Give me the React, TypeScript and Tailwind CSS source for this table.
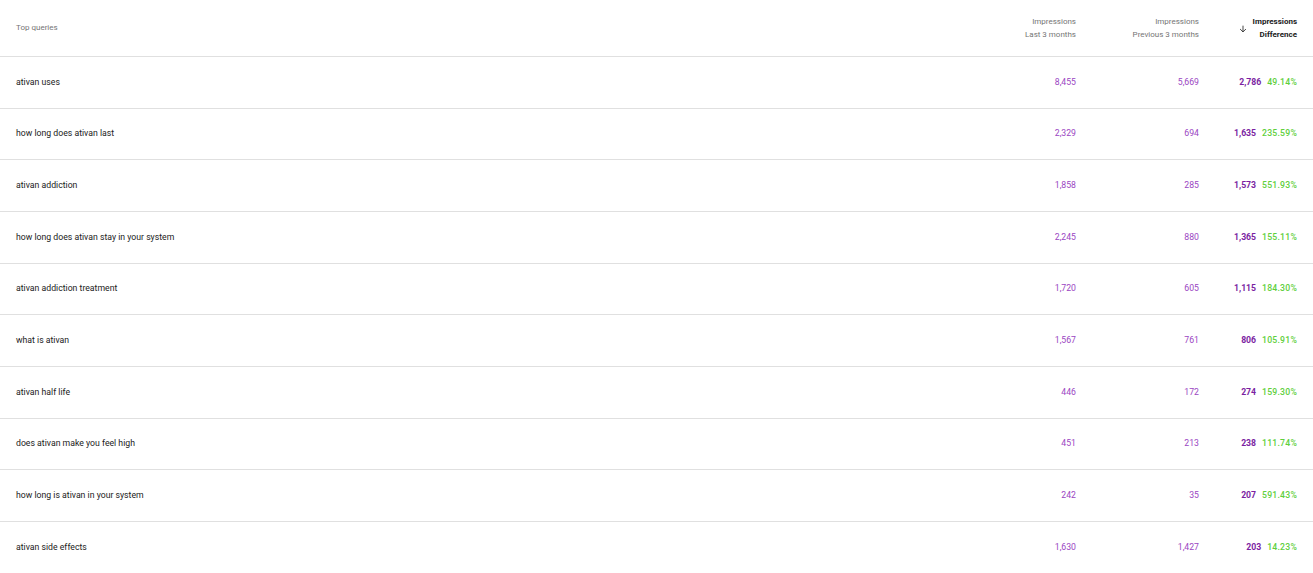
const rows = [
  { q: "ativan uses", last: "8,455", prev: "5,669", diff: "2,786", pct: "49.14%" },
  { q: "how long does ativan last", last: "2,329", prev: "694", diff: "1,635", pct: "235.59%" },
  { q: "ativan addiction", last: "1,858", prev: "285", diff: "1,573", pct: "551.93%" },
  { q: "how long does ativan stay in your system", last: "2,245", prev: "880", diff: "1,365", pct: "155.11%" },
  { q: "ativan addiction treatment", last: "1,720", prev: "605", diff: "1,115", pct: "184.30%" },
  { q: "what is ativan", last: "1,567", prev: "761", diff: "806", pct: "105.91%" },
  { q: "ativan half life", last: "446", prev: "172", diff: "274", pct: "159.30%" },
  { q: "does ativan make you feel high", last: "451", prev: "213", diff: "238", pct: "111.74%" },
  { q: "how long is ativan in your system", last: "242", prev: "35", diff: "207", pct: "591.43%" },
  { q: "ativan side effects", last: "1,630", prev: "1,427", diff: "203", pct: "14.23%" },
]

export default function App() {
  return (
    <div className="min-h-screen bg-white font-['Roboto',sans-serif] text-[8.7px]">
      <div className="flex items-center h-[57px] px-4 border-b border-[#e0e0e0] leading-[13px]">
        <div className="flex-1 text-[#757575] text-[8px] -mt-[2px]">Top queries</div>
        <div className="w-[120px] text-right text-[#757575] text-[8px]">
          <div>Impressions</div>
          <div>Last 3 months</div>
        </div>
        <div className="w-[123px] text-right text-[#757575] text-[8px]">
          <div>Impressions</div>
          <div>Previous 3 months</div>
        </div>
        <div className="w-[98px] flex items-center justify-end gap-[5px] text-[#212121] font-bold text-[8px]">
          <svg width="10" height="10" viewBox="0 0 24 24" className="mt-[1px]">
            <path d="M12 4v15M5 12l7 7 7-7" stroke="#212121" strokeWidth="2" fill="none" />
          </svg>
          <div className="text-right">
            <div>Impressions</div>
            <div>Difference</div>
          </div>
        </div>
      </div>
      {rows.map((r) => (
        <div key={r.q} className="flex items-center h-[51.67px] px-4 border-b border-[#e0e0e0] last:border-b-0">
          <div className="flex-1 text-[#212121]">{r.q}</div>
          <div className="w-[120px] text-right text-[#9a45c2]">{r.last}</div>
          <div className="w-[123px] text-right text-[#9a45c2]">{r.prev}</div>
          <div className="w-[98px] text-right">
            <span className="font-bold text-[#7b1fa2]">{r.diff}</span>
            <span className="ml-[6px] font-medium tracking-[0.2px] text-[#5fcf3d]">{r.pct}</span>
          </div>
        </div>
      ))}
    </div>
  )
}
